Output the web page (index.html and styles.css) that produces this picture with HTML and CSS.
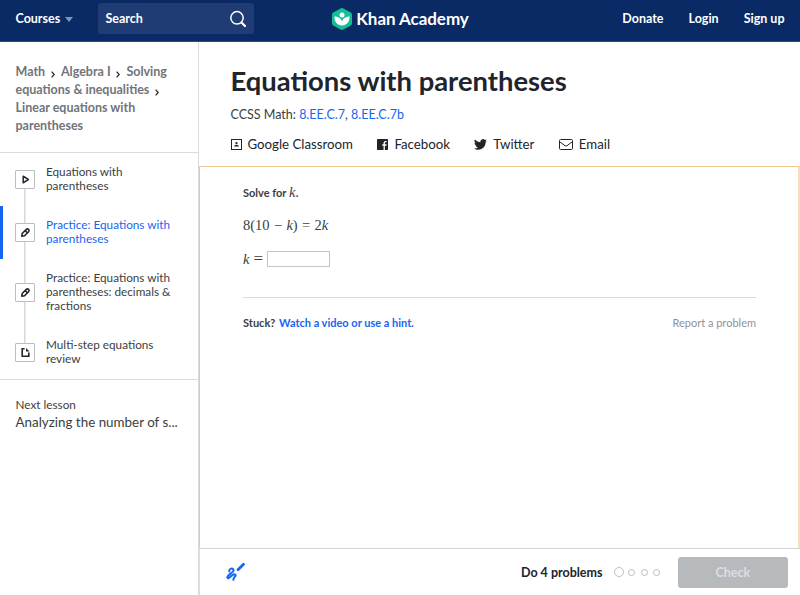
FILE: index.html
```html
<!DOCTYPE html>
<html lang="en">
  <head>
    <meta charset="UTF-8" />
    <title>Equations with parentheses | Khan Academy</title>
    <link rel="stylesheet" href="styles.css">
  </head>
  <body>
    <header>
      <div class="header-left">
        <a href="#" class="courses">Courses <span class="caret"></span></a>
        <div class="search">
          <span>Search</span>
          <svg width="18" height="18" viewBox="0 0 18 18" fill="none" stroke="#fff">
            <circle cx="8" cy="7.8" r="6.2" stroke-width="1.5" />
            <path d="M12.5 12.5L16 16" stroke-width="2.2" stroke-linecap="round" />
          </svg>
        </div>
      </div>
      <a href="#" class="logo">
        <svg width="22" height="22" viewBox="0 0 22 22">
          <path d="M9.5 0.5Q11 -.3 12.5 .5L19.7 4.6Q21 5.4 21 7V15Q21 16.6 19.7 17.4L12.5 21.5Q11 22.3 9.5 21.5L2.3 17.4Q1 16.6 1 15V7Q1 5.4 2.3 4.6Z" fill="#14bf96" />
          <circle cx="11" cy="7" r="2.5" fill="#fff" />
          <path d="M3.5 8.5C7.5 8.5 10.5 11 11 13.6C11.5 11 14.5 8.5 18.5 8.5C18.8 14 15.5 17.5 11 17.5C6.5 17.5 3.2 14 3.5 8.5Z" fill="#fff" />
        </svg>
        <span>Khan Academy</span>
      </a>
      <nav>
        <a href="#">Donate</a>
        <a href="#">Login</a>
        <a href="#">Sign up</a>
      </nav>
    </header>

    <div class="container">
      <aside>
        <div class="breadcrumbs">
          <a href="#">Math</a><svg class="sep" viewBox="0 0 4 7"><path d="M.6 .6L3.2 3.5L.6 6.4" /></svg><a href="#">Algebra I</a><svg class="sep" viewBox="0 0 4 7"><path d="M.6 .6L3.2 3.5L.6 6.4" /></svg><a href="#">Solving<br>equations &amp; inequalities</a><svg class="sep" viewBox="0 0 4 7"><path d="M.6 .6L3.2 3.5L.6 6.4" /></svg><br>
          <a href="#">Linear equations with<br>parentheses</a>
        </div>

        <ul class="lessons">
          <li class="lesson first">
            <span class="lesson-icon">
              <svg width="11" height="11" viewBox="0 0 11 11"><path d="M3.2 2.2L8.3 5.5L3.2 8.8Z" fill="none" stroke="#21242c" stroke-width="1.5" stroke-linejoin="round" /></svg>
            </span>
            <span class="lesson-title">Equations with parentheses</span>
          </li>
          <li class="lesson active">
            <span class="lesson-icon">
              <svg width="11" height="11" viewBox="0 0 11 11" fill="none" stroke="#21242c" stroke-width="1.6" stroke-linejoin="round"><path d="M1.8 9.2L2.2 6.5L6.3 2.4Q7.5 1.4 8.6 2.4Q9.6 3.5 8.6 4.7L4.5 8.8Z" /><path d="M5.2 3.6L7.4 5.8" /></svg>
            </span>
            <span class="lesson-title">Practice: Equations with parentheses</span>
          </li>
          <li class="lesson">
            <span class="lesson-icon">
              <svg width="11" height="11" viewBox="0 0 11 11" fill="none" stroke="#21242c" stroke-width="1.6" stroke-linejoin="round"><path d="M1.8 9.2L2.2 6.5L6.3 2.4Q7.5 1.4 8.6 2.4Q9.6 3.5 8.6 4.7L4.5 8.8Z" /><path d="M5.2 3.6L7.4 5.8" /></svg>
            </span>
            <span class="lesson-title">Practice: Equations with parentheses: decimals &amp; fractions</span>
          </li>
          <li class="lesson last">
            <span class="lesson-icon">
              <svg width="11" height="11" viewBox="0 0 11 11"><path d="M4.6 1.7H2.2V9.3H8.8V5.6" fill="none" stroke="#21242c" stroke-width="1.6" /><path d="M6 1L9.5 4.4H6Z" fill="#21242c" /></svg>
            </span>
            <span class="lesson-title">Multi-step equations review</span>
          </li>
        </ul>

        <div class="next-lesson">
          <div class="next-label">Next lesson</div>
          <a href="#" class="next-title">Analyzing the number of s...</a>
        </div>
      </aside>

      <main>
        <div class="page-head">
          <h1>Equations with parentheses</h1>
          <p class="standards">CCSS Math: <a href="#">8.EE.C.7</a>, <a href="#">8.EE.C.7b</a></p>
          <div class="share">
            <a href="#" class="classroom">
              <svg width="11" height="11" viewBox="0 0 11 11"><rect x=".5" y=".5" width="10" height="10" fill="none" stroke="#21242c" /><circle cx="5.5" cy="4.2" r="1.1" fill="#21242c" /><path d="M3 7.5Q3.3 5.8 5.5 5.8T8 7.5Z" fill="#21242c" /></svg>
              <span>Google Classroom</span>
            </a>
            <a href="#" class="facebook">
              <svg width="11" height="11" viewBox="0 0 11 11"><rect width="11" height="11" rx=".6" fill="#21242c" /><path d="M7.2 11V6.1M5.3 6H9.5M7.2 6.5V4.2Q7.2 2.6 8.7 2.6H9.6" fill="none" stroke="#fff" stroke-width="1.3" /></svg>
              <span>Facebook</span>
            </a>
            <a href="#" class="twitter">
              <svg width="13" height="11" viewBox="0 0 24 20"><path d="M24 2.4a10 10 0 0 1-2.8.8A5 5 0 0 0 23.3.4a10 10 0 0 1-3.1 1.2A4.9 4.9 0 0 0 11.8 6 14 14 0 0 1 1.7.9a4.9 4.9 0 0 0 1.5 6.6 5 5 0 0 1-2.2-.6 4.9 4.9 0 0 0 3.9 4.9 5 5 0 0 1-2.2.1 4.9 4.9 0 0 0 4.6 3.4A10 10 0 0 1 0 17.4a14 14 0 0 0 21.5-12.4A10 10 0 0 0 24 2.4Z" fill="#21242c" /></svg>
              <span>Twitter</span>
            </a>
            <a href="#" class="email">
              <svg width="14" height="11" viewBox="0 0 14 11" fill="none" stroke="#21242c"><rect x=".5" y=".5" width="13" height="10" rx="1" /><path d="M1 3L6 6.7Q7 7.4 8 6.7L13 3" /></svg>
              <span>Email</span>
            </a>
          </div>
        </div>

        <section class="exercise">
          <p class="prompt">Solve for <i class="math">k</i><span class="math">.</span></p>
          <p class="equation math">8(10 <span class="op">−</span> <i>k</i>) <span class="op">=</span> 2<i>k</i></p>
          <p class="answer math"><i>k</i> <span class="op">=</span><input type="text" aria-label="Your answer"></p>
          <div class="help">
            <span class="stuck">Stuck? <a href="#">Watch a video or use a hint.</a></span>
            <a href="#" class="report">Report a problem</a>
          </div>
        </section>

        <footer>
          <svg class="scratchpad" width="20" height="20" viewBox="0 0 20 20" fill="none" stroke="#1865f2" stroke-linecap="round" stroke-linejoin="round">
            <path d="M3.2 9.4C3.2 6.4 6.6 5.6 7.6 7.8C8.6 10.6 .8 12.6 1.4 15.6C2.4 18.4 6.4 11.4 9 12.4C11.2 13.6 7 15.4 7.4 17.8" stroke-width="2" />
            <path d="M12 7.8L17.5 2.3" stroke-width="2.8" />
          </svg>
          <div class="progress">
            <span class="progress-text">Do 4 problems</span>
            <span class="dot current"></span>
            <span class="dot"></span>
            <span class="dot"></span>
            <span class="dot"></span>
            <button>Check</button>
          </div>
        </footer>
      </main>
    </div>
  </body>
</html>
```

FILE: styles.css
```css
* {
  box-sizing: border-box;
}

body {
  font-family: Lato, sans-serif;
  color: #3b3e40;
  background: white;
  margin: 0;
  height: 595px;
  overflow: hidden;
}

a {
  color: inherit;
  text-decoration: none;
}

p,
h1,
ul {
  margin: 0;
  padding: 0;
}

svg {
  flex-shrink: 0;
}

header {
  display: grid;
  grid-template-columns: 1fr auto 1fr;
  align-items: start;
  height: 42px;
  background: #0a2a66;
  border-bottom: 1px solid #304a7b;
  color: white;
  font-size: 12.5px;
  font-weight: bold;
}

.header-left {
  display: flex;
  padding: 3px 0 0 15.5px;
}

.courses {
  display: flex;
  align-items: center;
  width: 82px;
  height: 31px;
}

.caret {
  margin: 2px 0 0 5px;
  border: 4px solid transparent;
  border-top: 5px solid #8494b2;
  border-bottom: 0;
}

.search {
  display: flex;
  justify-content: space-between;
  align-items: center;
  width: 156.5px;
  height: 31px;
  padding: 0 7px 0 8px;
  background: #1f3d74;
  border-radius: 3px;
}

.logo {
  display: flex;
  align-items: center;
  gap: 3px;
  padding-top: 8px;
  font-size: 17px;
  letter-spacing: -0.05px;
  line-height: 22px;
}

nav {
  display: flex;
  justify-content: flex-end;
  gap: 25px;
  padding: 11px 15.5px 0 0;
  line-height: 15px;
}

.container {
  display: flex;
  height: 553px;
}

aside {
  width: 199px;
  border-right: 1px solid #d9dadc;
}

.breadcrumbs {
  height: 111px;
  padding: 21px 0 0 15.5px;
  border-bottom: 1px solid #d9dadc;
  color: #71747a;
  font-size: 12.5px;
  font-weight: bold;
  line-height: 18px;
  white-space: nowrap;
}

.sep {
  width: 4px;
  height: 7px;
  margin: 0 5.9px;
  vertical-align: -2px;
  fill: none;
  stroke: #21242c;
  stroke-width: 1.2;
}

/* Lesson list */
.lessons {
  list-style: none;
  border-bottom: 1px solid #d9dadc;
}

.lesson {
  display: flex;
  align-items: center;
  gap: 11px;
  padding: 12.5px 20px 12.5px 12px;
  border-left: 3px solid transparent;
  font-size: 11.75px;
  line-height: 14px;
  background: linear-gradient(#d6d8da, #d6d8da) 21px 0 / 1.5px 100% no-repeat;
}

.lesson.first {
  background-position: 21px 100%;
  background-size: 1.5px 50%;
}

.lesson.last {
  background-size: 1.5px 50%;
}

.lesson.active {
  border-left-color: #1865f2;
  color: #1865f2;
}

.lesson-title {
  margin: -0.8px 0 0.8px;
}

.lesson-icon {
  display: flex;
  align-items: center;
  justify-content: center;
  flex-shrink: 0;
  width: 20px;
  height: 19px;
  background: white;
  border: 1px solid #babec2;
  border-radius: 1px;
}

.next-lesson {
  padding: 16px 0 0 15.5px;
  font-size: 11.75px;
  line-height: 17px;
}

.next-title {
  font-size: 13.4px;
  line-height: 18px;
}

main {
  display: flex;
  flex-direction: column;
  flex: 1;
}

.page-head {
  height: 124px;
  padding: 22px 0 0 31.5px;
  color: #21242c;
}

h1 {
  font-size: 27.4px;
  line-height: 34px;
}

.standards {
  margin-top: 9px;
  color: #3b3e40;
  font-size: 12.5px;
  line-height: 16px;
}

.standards a,
.stuck a {
  color: #1865f2;
}

.share {
  display: flex;
  gap: 24.4px;
  margin-top: 12px;
  font-size: 13.25px;
  line-height: 18px;
}

.share a {
  display: flex;
  align-items: center;
  gap: 6px;
}

.exercise {
  flex: 1;
  padding: 15px 42px 0 43px;
  border: 1px solid #f0c896;
  border-right-width: 2px;
  border-right-color: #f5dfbf;
  border-bottom: 0;
}

.math {
  font-family: "Liberation Serif", serif;
  font-weight: normal;
  font-size: 14.5px;
}

.prompt {
  font-size: 11px;
  font-weight: bold;
  line-height: 20px;
}

.equation {
  margin-top: 12px;
  word-spacing: 0.7px;
  line-height: 20px;
}

.answer {
  display: flex;
  align-items: center;
  gap: 4px;
  height: 20px;
  margin-top: 14px;
}

.answer .op {
  font-size: 17px;
}

.answer input {
  width: 63px;
  height: 16px;
  padding: 0;
  border: 1px solid #c3c5c8;
}

.help {
  display: flex;
  justify-content: space-between;
  margin-top: 28px;
  padding-top: 17px;
  border-top: 1px solid #d9dadc;
  font-size: 11px;
  line-height: 15px;
}

.stuck {
  font-weight: bold;
}

.stuck a {
  margin-left: 1px;
}

.report {
  color: #8f9297;
}

footer {
  display: flex;
  justify-content: space-between;
  align-items: center;
  height: 47px;
  padding: 0 12.5px 0 26px;
  border-top: 1px solid #d2d4d6;
  border-left: 1px solid #f0dcc0;
}

.progress {
  display: flex;
  align-items: center;
}

.progress-text {
  margin-right: 11px;
  color: #21242c;
  font-size: 12.5px;
  font-weight: bold;
}

.dot {
  width: 7px;
  height: 7px;
  margin-left: 5.5px;
  border: 1.5px solid #babec2;
  border-radius: 50%;
}

.dot.current {
  width: 10px;
  height: 10px;
  margin-left: 0;
  margin-right: -1px;
}

button {
  width: 109.5px;
  height: 31px;
  margin-left: 18px;
  background: #b7babd;
  border: 0;
  border-radius: 3px;
  color: #dcdee0;
  font: bold 12.5px Lato, sans-serif;
}
```
